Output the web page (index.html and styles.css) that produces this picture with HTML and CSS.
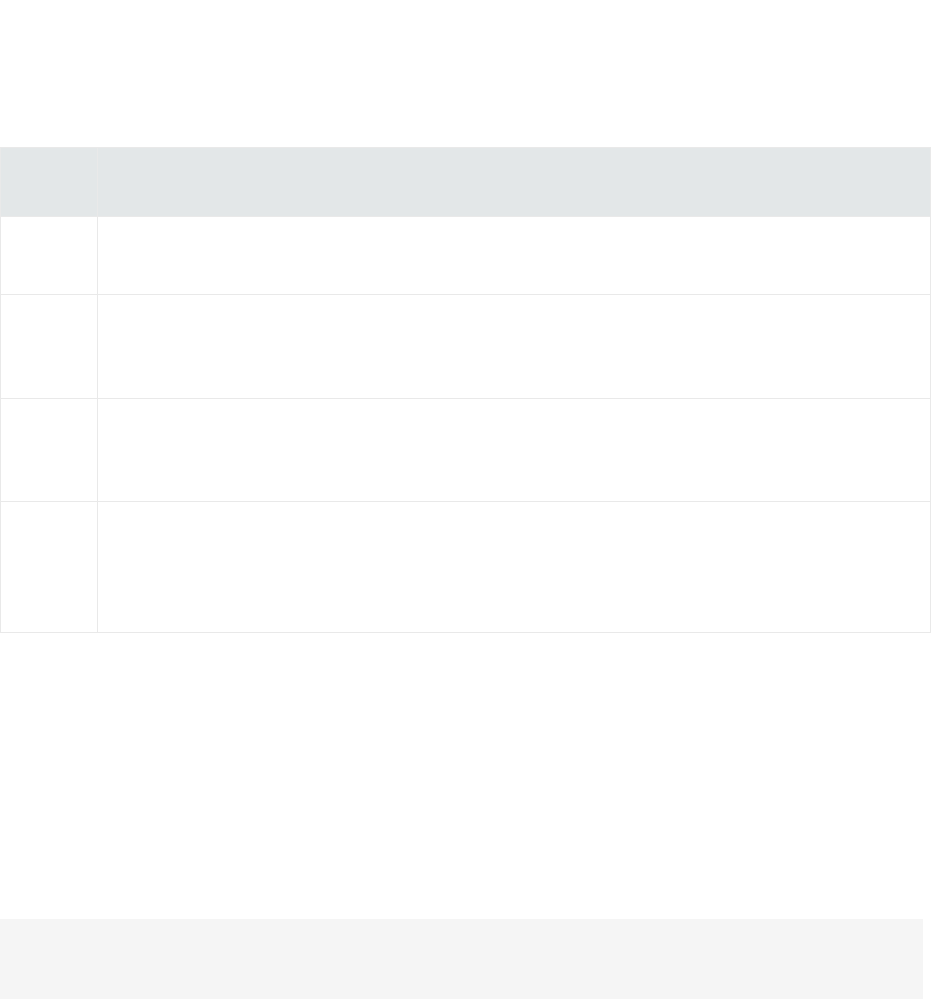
FILE: index.html
```html
<!DOCTYPE html>
<html lang="en">
<head>
<meta charset="utf-8">
<title>Table</title>
<link rel="stylesheet" href="styles.css">
</head>
<body>
<main class="page">
  <table class="grid">
    <thead>
      <tr class="row-head"><th class="col-a"></th><th class="col-b"></th></tr>
    </thead>
    <tbody>
      <tr class="row-1"><td></td><td></td></tr>
      <tr class="row-2"><td></td><td></td></tr>
      <tr class="row-3"><td></td><td></td></tr>
      <tr class="row-4"><td></td><td></td></tr>
    </tbody>
  </table>
  <div class="footer-box"></div>
</main>
</body>
</html>
```
FILE: styles.css
```css
html, body {
  margin: 0;
  padding: 0;
  background: #ffffff;
  font-family: "Open Sans", "Liberation Sans", sans-serif;
}
.page {
  padding-top: 147px;
  width: 931px;
}
.grid {
  width: 931px;
  border-collapse: separate;
  border-spacing: 0;
  table-layout: fixed;
}
.grid th, .grid td {
  padding: 0;
  border-right: 1px solid #e9e9e9;
  border-bottom: 1px solid #e9e9e9;
  box-sizing: border-box;
}
.grid tr > :first-child {
  border-left: 1px solid #e9e9e9;
}
.grid .col-a { width: 98px; }
.row-head th {
  background: #e3e7e8;
  height: 70px;
  border-top: 1px solid #e9e9e9;
}
.row-1 td { height: 78px; }
.row-2 td { height: 104px; }
.row-3 td { height: 103px; }
.row-4 td { height: 131px; }
.footer-box {
  margin-top: 286px;
  width: 923px;
  height: 80px;
  background: #f5f5f5;
}
```
